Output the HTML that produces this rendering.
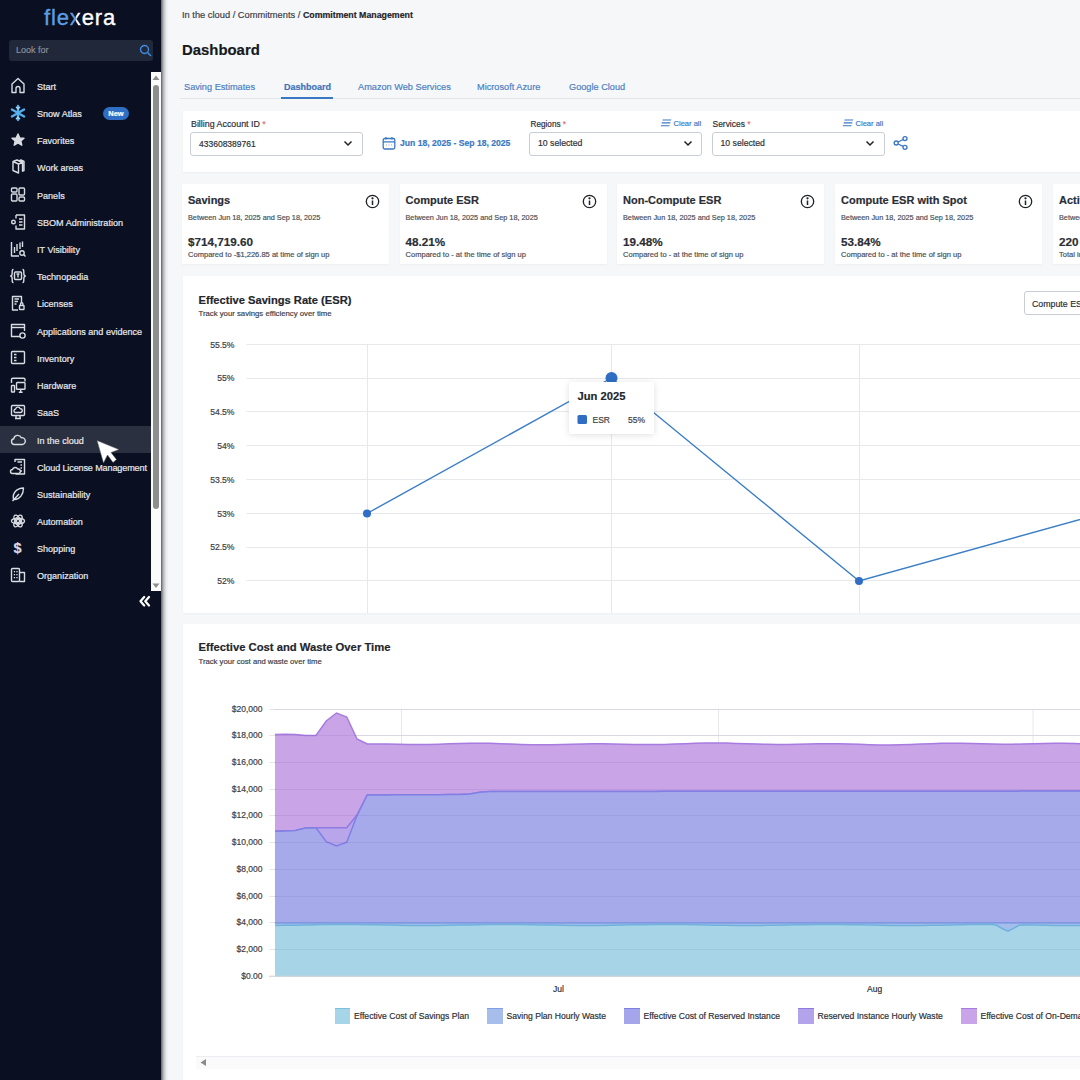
<!DOCTYPE html>
<html><head><meta charset="utf-8">
<style>
*{box-sizing:border-box;margin:0;padding:0}
html,body{width:1080px;height:1080px;overflow:hidden;background:#f6f7f9;font-family:"Liberation Sans",sans-serif;color:#1f2328}
.abs{position:absolute;white-space:nowrap}
#side{position:absolute;left:0;top:0;width:161px;height:1080px;background:#0a1022}
#shadow{position:absolute;left:161px;top:0;width:8px;height:1080px;background:linear-gradient(to right,#606266,#b5b7ba 30%,#eaebed 65%,#f6f7f9)}
.logo{position:absolute;left:44px;top:5px;font-size:22px;color:#fff;letter-spacing:0.85px;white-space:nowrap;-webkit-text-stroke:0.35px currentColor}
.search{position:absolute;left:9px;top:40px;width:144px;height:21px;background:#21283a;border-radius:3px}
.search span{position:absolute;left:7px;top:5px;font-size:9px;color:#8a909c}
.nav{position:absolute;left:37px;font-size:9.05px;color:#e6e8ec;-webkit-text-stroke:0.2px #e6e8ec}
.ico{position:absolute;left:10px;width:16px;height:16px}
.sb{position:absolute;left:151px;top:72px;width:10px;height:519px;background:#fbfbfb}
.thumb{position:absolute;left:153px;top:85px;width:6px;height:424px;background:#8e8e8e;border-radius:3px}
.card{position:absolute;background:#fff;box-shadow:0 1px 2px rgba(0,0,0,0.04)}
.kt,.ks,.kv,.kc,.nav,.tab,.lg,.yl,.lbl{white-space:nowrap}
.lbl{font-size:9px;color:#2b2f36}
.sel{position:absolute;height:24px;border:1px solid #c9cdd5;border-radius:3px;background:#fff}
.sel span{position:absolute;left:8px;top:5px;font-size:9px;color:#2b2f36}
.tab{position:absolute;top:82px;font-size:9.2px;color:#4b80c2}
.kt{position:absolute;font-size:11px;font-weight:bold;color:#2a2e35}
.ks{position:absolute;font-size:7.3px;color:#4a4f57}
.kv{position:absolute;font-size:11.7px;font-weight:bold;color:#2a2e35}
.kc{position:absolute;font-size:7.55px;color:#4a4f57}
.yl{position:absolute;font-size:9px;color:#3a3e45;text-align:right;width:50px}
.lg{position:absolute;top:1009px;font-size:9px;color:#3a3e45}
.sw{position:absolute;top:1008px;width:15px;height:15px}
.stk{-webkit-text-stroke:0.18px currentColor}
</style></head><body>
<div id="shadow"></div>
<div class="stk"><div id="side">
  <div class="logo"><span style="color:#5c9ee6">fle</span><span style="background:linear-gradient(to right,#5c9ee6 45%,#fff 55%);-webkit-background-clip:text;background-clip:text;color:transparent">x</span><span style="color:#fff">era</span></div>
  <div class="search"><span>Look for</span>
    <svg style="position:absolute;left:130px;top:4px" width="13" height="13" viewBox="0 0 13 13"><circle cx="5.5" cy="5.5" r="4" fill="none" stroke="#3d8be0" stroke-width="1.4"/><path d="M8.5 8.5L12 12" stroke="#3d8be0" stroke-width="1.5"/></svg>
  </div>
  <div style="position:absolute;left:0;top:426px;width:151px;height:27px;background:#2a3040"></div>
  <!-- icons -->
  <svg style="position:absolute;left:0;top:0" width="40" height="600" viewBox="0 0 40 600" fill="none" stroke="#d9dce2" stroke-width="1.4" stroke-linejoin="round">
    <!-- Start house y=86 -->
    <path d="M12 92.5V84L18 78.5L24 84V92.5H20V88.5a2 2 0 0 0-4 0V92.5Z"/>
    <!-- Snow atlas y=113 -->
    <g stroke="#56b0ee" stroke-width="2.3" stroke-linecap="round"><path d="M18 106V120M11.9 109.5L24.1 116.5M11.9 116.5L24.1 109.5"/><path d="M16.3 107.2L18 108.8L19.7 107.2M16.3 118.8L18 117.2L19.7 118.8" stroke-width="1.2" stroke="#9fe0f8"/></g>
    <!-- Favorites star y=140 -->
    <path d="M18 134L19.8 138L24 138.3L20.8 141L21.8 145.2L18 143L14.2 145.2L15.2 141L12 138.3L16.2 138Z" fill="#d9dce2"/>
    <!-- Work areas y=167 -->
    <path d="M13 161.5L18.5 164V173L13 170.5Z M13 161.5L17 160L22.5 162.5L18.5 164M19 161L21 160L24 161.5V170.5L22.5 171.2V162.5"/>
    <!-- Panels y=195 -->
    <rect x="11.5" y="188" width="5.5" height="4" rx="1"/><rect x="19" y="188" width="5.5" height="7" rx="1"/><rect x="11.5" y="194" width="5.5" height="7" rx="1"/><rect x="19" y="197" width="5.5" height="4" rx="1"/>
    <!-- SBOM y=222 -->
    <path d="M16 215H24.5V229H16V225.5M16 218.5V215"/><circle cx="13.5" cy="222" r="1.8"/><path d="M19 219H22.5M19 222H22.5M19 225H22.5"/>
    <!-- IT Visibility y=249 -->
    <path d="M11.5 242V256H19M14.5 247V253M17 244V251M20 242.5V249M22.5 241.5V247"/><circle cx="22" cy="253" r="2.2"/><path d="M23.6 254.6L25.5 256.5"/>
    <!-- Technopedia y=276 -->
    <path d="M13.5 269.5C12 269.5 12.2 270.8 12.2 272.8C12.2 274.8 11.6 276 10.6 276C11.6 276 12.2 277.2 12.2 279.2C12.2 281.2 12 282.5 13.5 282.5M22.5 269.5C24 269.5 23.8 270.8 23.8 272.8C23.8 274.8 24.4 276 25.4 276C24.4 276 23.8 277.2 23.8 279.2C23.8 281.2 24 282.5 22.5 282.5"/><rect x="14.5" y="272" width="7" height="7.5" rx="1"/><path d="M16.5 274H19.5M18 274V277.5"/>
    <!-- Licenses y=303 -->
    <path d="M21.5 303V296.5H12.5V310H18"/><path d="M14.5 299H19M14.5 301.5H18M14.5 304H16.5"/><rect x="19.5" y="305.5" width="4.5" height="4" rx="0.5"/><path d="M20.5 305.5V304a1.2 1.2 0 0 1 2.4 0V305.5"/>
    <!-- Applications y=331 -->
    <path d="M20 336.5H11.5V324.5H24.5V331"/><path d="M11.5 327.5H24.5"/><circle cx="22.5" cy="335.5" r="2.6"/>
    <!-- Inventory y=358 -->
    <rect x="11.5" y="351.5" width="13" height="12" rx="1"/><path d="M14 354.5H16.5M14 357.5H16.5M14 360.5H16.5"/>
    <!-- Hardware y=385 -->
    <path d="M11.5 383V379.5a1.3 1.3 0 0 1 1.3-1.3H23.7a1.3 1.3 0 0 1 1.3 1.3V381.5"/><rect x="11.5" y="385.5" width="3" height="6.5" rx="0.6"/><rect x="16.5" y="382.5" width="8.5" height="6.8" rx="0.8"/><path d="M20.7 389.3V392M18.8 392.2H22.6"/>
    <!-- SaaS y=412 -->
    <rect x="11.5" y="405.5" width="13" height="10" rx="1"/><path d="M15.2 412.5a1.8 1.8 0 0 1 .4-3.5a2.4 2.4 0 0 1 4.6-.3a1.8 1.8 0 0 1 .4 3.8Z M16 415.5V418.5M20 415.5V418.5M15 418.5H21"/>
    <!-- In the cloud y=440 -->
    <path d="M14.2 444.5a2.9 2.9 0 0 1-.5-5.7a4 4 0 0 1 7.6-1.1a3.2 3.2 0 0 1 1.1 6.8Z"/>
    <!-- Cloud License y=467 -->
    <path d="M15 462V459.5H24.5V474H15.5"/><path d="M17.5 462H22M20.5 465H22M20.5 468H22M20.5 471H22"/><path d="M12.5 473.5a2 2 0 0 1 0-4a2.8 2.8 0 0 1 5.2-.5a2.2 2.2 0 0 1 .8 4.5Z"/>
    <!-- Sustainability y=494 -->
    <path d="M13.5 499.5C12 493 17 488 23.5 488C23.5 494 20 500 13.5 499.5Z M12.5 501L19 494"/>
    <!-- Automation y=521 -->
    <ellipse cx="18" cy="521" rx="6.5" ry="2.8"/><ellipse cx="18" cy="521" rx="6.5" ry="2.8" transform="rotate(60 18 521)"/><ellipse cx="18" cy="521" rx="6.5" ry="2.8" transform="rotate(-60 18 521)"/><circle cx="18" cy="521" r="1.6"/>
    <!-- Organization y=575 -->
    <rect x="11.5" y="568.5" width="8" height="13" rx="1"/><path d="M19.5 572.5H24.5V581.5H19.5"/><g fill="#d9dce2" stroke="none"><rect x="13.8" y="571" width="1.3" height="1.3"/><rect x="16.3" y="571" width="1.3" height="1.3"/><rect x="13.8" y="574" width="1.3" height="1.3"/><rect x="16.3" y="574" width="1.3" height="1.3"/><rect x="13.8" y="577" width="1.3" height="1.3"/><rect x="16.3" y="577" width="1.3" height="1.3"/></g>
  </svg>
  <div class="abs" style="left:13.5px;top:539.5px;font-size:14.5px;font-weight:bold;color:#d9dce2;line-height:16px">$</div>
  <div class="nav" style="top:81.5px">Start</div>
  <div class="nav" style="top:108.5px">Snow Atlas</div>
  <div class="abs" style="left:103px;top:106.5px;width:26px;height:13px;border-radius:7px;background:#2f6ec4;color:#fff;font-size:7.5px;font-weight:bold;text-align:center;line-height:13px">New</div>
  <div class="nav" style="top:135.5px">Favorites</div>
  <div class="nav" style="top:162.5px">Work areas</div>
  <div class="nav" style="top:190.5px">Panels</div>
  <div class="nav" style="top:217.5px">SBOM Administration</div>
  <div class="nav" style="top:244.5px">IT Visibility</div>
  <div class="nav" style="top:271.5px">Technopedia</div>
  <div class="nav" style="top:298.5px">Licenses</div>
  <div class="nav" style="top:326.5px">Applications and evidence</div>
  <div class="nav" style="top:353.5px">Inventory</div>
  <div class="nav" style="top:380.5px">Hardware</div>
  <div class="nav" style="top:407.5px">SaaS</div>
  <div class="nav" style="top:435.5px">In the cloud</div>
  <div class="nav" style="top:462.5px;letter-spacing:-0.12px">Cloud License Management</div>
  <div class="nav" style="top:489.5px">Sustainability</div>
  <div class="nav" style="top:516.5px">Automation</div>
  <div class="nav" style="top:543.5px">Shopping</div>
  <div class="nav" style="top:570.5px">Organization</div>
  <div class="sb"></div>
  <div class="thumb"></div>
  <svg style="position:absolute;left:151px;top:72px" width="10" height="519"><path d="M1.5 8L5 3.5L8.5 8Z" fill="#8e8e8e"/><path d="M1.5 511.5L5 516L8.5 511.5Z" fill="#8e8e8e"/></svg>
  <svg style="position:absolute;left:139px;top:595px" width="12" height="12" viewBox="0 0 12 12" fill="none" stroke="#fff" stroke-width="2.2" stroke-linecap="round" stroke-linejoin="round"><path d="M5.2 2L1.5 6.3L5.2 10.5M10 2L6.3 6.3L10 10.5"/></svg>
  <!-- cursor -->
  <svg style="position:absolute;left:0;top:0" width="161" height="600"><path d="M97 440.5L119 449.5L111 452.5L116.5 459.5L113 462.5L107.5 455L103.5 463Z" fill="#fff" stroke="#555" stroke-width="0.5"/></svg>
</div>
<!-- header -->
<div class="abs" style="left:182px;top:10px;font-size:9.3px;color:#3c4047">In the cloud / Commitments / <b style="color:#1f2328;font-size:8.8px">Commitment Management</b></div>
<div class="abs" style="left:182px;top:42px;font-size:14.9px;font-weight:bold;color:#16191d">Dashboard</div>
<div class="abs" style="left:180px;top:98px;width:900px;height:1px;background:#e3e5e9"></div>
<div class="tab" style="left:184px">Saving Estimates</div>
<div class="tab" style="left:284px;font-weight:bold;color:#3c72b8;font-size:9px">Dashboard</div>
<div class="abs" style="left:281px;top:97px;width:52px;height:2px;background:#3b78c4"></div>
<div class="tab" style="left:358px">Amazon Web Services</div>
<div class="tab" style="left:477px">Microsoft Azure</div>
<div class="tab" style="left:569px">Google Cloud</div>

<!-- filter card -->
<div class="card" style="left:182.5px;top:111px;width:898px;height:60.5px"></div>
<div class="abs lbl" style="left:191px;top:118.5px;font-size:8.85px">Billing Account ID <span style="color:#e07070">*</span></div>
<div class="sel" style="left:190px;top:131.5px;width:173px"><span style="font-size:8.5px;top:6px">433608389761</span></div>
<svg class="abs" style="left:343px;top:140px" width="10" height="7" viewBox="0 0 10 7"><path d="M1.5 1.5L5 5L8.5 1.5" fill="none" stroke="#1f2328" stroke-width="1.5"/></svg>
<svg class="abs" style="left:382px;top:136px" width="14" height="14" viewBox="0 0 14 14" fill="none" stroke="#3b78c4" stroke-width="1.3"><rect x="1.2" y="2.5" width="11.6" height="10.5" rx="1.5"/><path d="M1.2 5.8H12.8M4 1V3.5M10 1V3.5"/><path d="M4 9H4.6M6.7 9H7.3M9.4 9H10" stroke-width="1"/></svg>
<div class="abs" style="left:400px;top:138px;font-size:8.6px;font-weight:bold;color:#3b78c4">Jun 18, 2025 - Sep 18, 2025</div>

<div class="abs lbl" style="left:530.5px;top:119.5px;font-size:8.2px">Regions <span style="color:#e07070">*</span></div>
<svg class="abs" style="left:660px;top:118px" width="12" height="10" viewBox="0 0 12 10" fill="#3b78c4"><path d="M2.6 1.4H11.3L11 2.5H2.3ZM1.8 4.3H10.5L10.2 5.4H1.5ZM1 7.2H9.7L9.4 8.3H0.7Z"/></svg>
<div class="abs" style="left:673.5px;top:119px;font-size:7.55px;color:#3b78c4">Clear all</div>
<div class="sel" style="left:529px;top:131.5px;width:173px"><span style="font-size:8.7px;top:5.5px">10 selected</span></div>
<svg class="abs" style="left:682.5px;top:140px" width="10" height="7" viewBox="0 0 10 7"><path d="M1.5 1.5L5 5L8.5 1.5" fill="none" stroke="#1f2328" stroke-width="1.5"/></svg>

<div class="abs lbl" style="left:712.5px;top:118.5px;font-size:8.45px">Services <span style="color:#e07070">*</span></div>
<svg class="abs" style="left:842px;top:118px" width="12" height="10" viewBox="0 0 12 10" fill="#3b78c4"><path d="M2.6 1.4H11.3L11 2.5H2.3ZM1.8 4.3H10.5L10.2 5.4H1.5ZM1 7.2H9.7L9.4 8.3H0.7Z"/></svg>
<div class="abs" style="left:855.5px;top:119px;font-size:7.55px;color:#3b78c4">Clear all</div>
<div class="sel" style="left:711.5px;top:131.5px;width:173px"><span style="font-size:8.7px;top:5.5px">10 selected</span></div>
<svg class="abs" style="left:864.5px;top:140px" width="10" height="7" viewBox="0 0 10 7"><path d="M1.5 1.5L5 5L8.5 1.5" fill="none" stroke="#1f2328" stroke-width="1.5"/></svg>
<svg class="abs" style="left:892px;top:135px" width="17" height="16" viewBox="0 0 17 16" fill="none" stroke="#3b78c4" stroke-width="1.35"><circle cx="4.2" cy="8" r="2"/><circle cx="13" cy="3.6" r="2"/><circle cx="13" cy="12.3" r="2"/><path d="M6 7L11.2 4.5M6 9L11.2 11.4"/></svg>
<!-- KPI cards -->
<div class="card" style="left:182px;top:184px;width:207px;height:80px"></div>
<div class="kt" style="left:188px;top:194px">Savings</div>
<svg class="abs" style="left:364.5px;top:193.5px" width="15" height="15" viewBox="0 0 15 15" fill="none" stroke="#1f2328" stroke-width="1.3"><circle cx="7.5" cy="7.5" r="6.2"/><path d="M7.5 6.5V11" stroke-width="1.5"/><circle cx="7.5" cy="4.3" r="0.5" fill="#1f2328"/></svg>
<div class="ks" style="left:188px;top:213px">Between Jun 18, 2025 and Sep 18, 2025</div>
<div class="kv" style="left:188px;top:235px">$714,719.60</div>
<div class="kc" style="left:188px;top:249.5px">Compared to -$1,226.85 at time of sign up</div>
<div class="card" style="left:399.5px;top:184px;width:207px;height:80px"></div>
<div class="kt" style="left:405.5px;top:194px">Compute ESR</div>
<svg class="abs" style="left:582.0px;top:193.5px" width="15" height="15" viewBox="0 0 15 15" fill="none" stroke="#1f2328" stroke-width="1.3"><circle cx="7.5" cy="7.5" r="6.2"/><path d="M7.5 6.5V11" stroke-width="1.5"/><circle cx="7.5" cy="4.3" r="0.5" fill="#1f2328"/></svg>
<div class="ks" style="left:405.5px;top:213px">Between Jun 18, 2025 and Sep 18, 2025</div>
<div class="kv" style="left:405.5px;top:235px">48.21%</div>
<div class="kc" style="left:405.5px;top:249.5px">Compared to - at the time of sign up</div>
<div class="card" style="left:617px;top:184px;width:207px;height:80px"></div>
<div class="kt" style="left:623px;top:194px">Non-Compute ESR</div>
<svg class="abs" style="left:799.5px;top:193.5px" width="15" height="15" viewBox="0 0 15 15" fill="none" stroke="#1f2328" stroke-width="1.3"><circle cx="7.5" cy="7.5" r="6.2"/><path d="M7.5 6.5V11" stroke-width="1.5"/><circle cx="7.5" cy="4.3" r="0.5" fill="#1f2328"/></svg>
<div class="ks" style="left:623px;top:213px">Between Jun 18, 2025 and Sep 18, 2025</div>
<div class="kv" style="left:623px;top:235px">19.48%</div>
<div class="kc" style="left:623px;top:249.5px">Compared to - at the time of sign up</div>
<div class="card" style="left:835px;top:184px;width:207px;height:80px"></div>
<div class="kt" style="left:841px;top:194px">Compute ESR with Spot</div>
<svg class="abs" style="left:1017.5px;top:193.5px" width="15" height="15" viewBox="0 0 15 15" fill="none" stroke="#1f2328" stroke-width="1.3"><circle cx="7.5" cy="7.5" r="6.2"/><path d="M7.5 6.5V11" stroke-width="1.5"/><circle cx="7.5" cy="4.3" r="0.5" fill="#1f2328"/></svg>
<div class="ks" style="left:841px;top:213px">Between Jun 18, 2025 and Sep 18, 2025</div>
<div class="kv" style="left:841px;top:235px">53.84%</div>
<div class="kc" style="left:841px;top:249.5px">Compared to - at the time of sign up</div>
<div class="card" style="left:1053px;top:184px;width:207px;height:80px"></div>
<div class="kt" style="left:1059px;top:194px">Active Commitments</div>
<div class="ks" style="left:1059px;top:213px">Between Jun 18, 2025 and Sep 18, 2025</div>
<div class="kv" style="left:1059px;top:235px">220</div>
<div class="kc" style="left:1059px;top:249.5px">Total in use</div>
<!-- ESR card -->
<div class="card" style="left:183px;top:275.5px;width:897px;height:337.5px"></div>
<div class="abs" style="left:198.5px;top:293.5px;font-size:11.15px;font-weight:bold;color:#22262c">Effective Savings Rate (ESR)</div>
<div class="abs" style="left:198.5px;top:309px;font-size:7.75px;color:#3a3e45">Track your savings efficiency over time</div>
<div class="abs" style="left:1024px;top:291px;width:80px;height:24px;border:1px solid #c9cdd5;border-radius:3px;background:#fff"></div>
<div class="abs" style="left:1032px;top:299px;font-size:8.8px;color:#2b2f36">Compute ESR</div>
<svg class="abs" style="left:0;top:0" width="1080" height="620">
<path d="M246.5 344.5H1080" stroke="#e7e8ec" stroke-width="1"/>
<path d="M246.5 378.5H1080" stroke="#e7e8ec" stroke-width="1"/>
<path d="M246.5 411.5H1080" stroke="#e7e8ec" stroke-width="1"/>
<path d="M246.5 445.5H1080" stroke="#e7e8ec" stroke-width="1"/>
<path d="M246.5 479.5H1080" stroke="#e7e8ec" stroke-width="1"/>
<path d="M246.5 513.5H1080" stroke="#e7e8ec" stroke-width="1"/>
<path d="M246.5 547.5H1080" stroke="#e7e8ec" stroke-width="1"/>
<path d="M246.5 580.5H1080" stroke="#e7e8ec" stroke-width="1"/>
<path d="M367.5 344.5V613" stroke="#e7e8ec" stroke-width="1"/>
<path d="M611.5 344.5V613" stroke="#e7e8ec" stroke-width="1"/>
<path d="M859.5 344.5V613" stroke="#e7e8ec" stroke-width="1"/>
<path d="M367 513.5L611.5 378L859 581L1105 512.5" fill="none" stroke="#3b7ec6" stroke-width="1.4"/>
<circle cx="367" cy="513.5" r="4" fill="#2f6ec4"/><circle cx="859" cy="581" r="4" fill="#2f6ec4"/><circle cx="611.5" cy="378" r="6" fill="#2f6ec4"/>
<defs><filter id="sh" x="-30%" y="-30%" width="160%" height="160%"><feDropShadow dx="0" dy="1" stdDeviation="3" flood-color="#000" flood-opacity="0.13"/></filter></defs>
<rect x="569" y="382" width="85" height="52" rx="3" fill="#fff" filter="url(#sh)"/>
<rect x="577.5" y="415" width="9.5" height="9" rx="1.5" fill="#2f6ec4"/>
</svg>
<div class="yl" style="left:184.5px;top:338.5px;font-size:8.6px;line-height:12px">55.5%</div>
<div class="yl" style="left:184.5px;top:372px;font-size:8.6px;line-height:12px">55%</div>
<div class="yl" style="left:184.5px;top:406px;font-size:8.6px;line-height:12px">54.5%</div>
<div class="yl" style="left:184.5px;top:439.5px;font-size:8.6px;line-height:12px">54%</div>
<div class="yl" style="left:184.5px;top:474px;font-size:8.6px;line-height:12px">53.5%</div>
<div class="yl" style="left:184.5px;top:507.5px;font-size:8.6px;line-height:12px">53%</div>
<div class="yl" style="left:184.5px;top:541px;font-size:8.6px;line-height:12px">52.5%</div>
<div class="yl" style="left:184.5px;top:575px;font-size:8.6px;line-height:12px">52%</div>
<div class="abs" style="left:577.5px;top:390px;font-size:11.2px;font-weight:bold;color:#22262c">Jun 2025</div>
<div class="abs" style="left:592.5px;top:415px;font-size:8.5px;color:#3a3e45">ESR</div>
<div class="abs" style="left:628px;top:415px;font-size:8.5px;color:#3a3e45">55%</div>
<!-- Cost card -->
<div class="card" style="left:183px;top:624px;width:897px;height:456px"></div>
<div class="abs" style="left:198.5px;top:640.5px;font-size:11.25px;font-weight:bold;color:#22262c">Effective Cost and Waste Over Time</div>
<div class="abs" style="left:198.5px;top:657px;font-size:7.7px;color:#3a3e45">Track your cost and waste over time</div>
<svg class="abs" style="left:0;top:0" width="1080" height="1080">
<defs><clipPath id="cp"><rect x="274" y="600" width="806" height="377"/></clipPath></defs>
<path d="M269 709.50H1080" stroke="#e7e8ec" stroke-width="1"/>
<path d="M269 735.50H1080" stroke="#e7e8ec" stroke-width="1"/>
<path d="M269 762.50H1080" stroke="#e7e8ec" stroke-width="1"/>
<path d="M269 789.50H1080" stroke="#e7e8ec" stroke-width="1"/>
<path d="M269 815.50H1080" stroke="#e7e8ec" stroke-width="1"/>
<path d="M269 842.50H1080" stroke="#e7e8ec" stroke-width="1"/>
<path d="M269 869.50H1080" stroke="#e7e8ec" stroke-width="1"/>
<path d="M269 896.50H1080" stroke="#e7e8ec" stroke-width="1"/>
<path d="M269 922.50H1080" stroke="#e7e8ec" stroke-width="1"/>
<path d="M269 949.50H1080" stroke="#e7e8ec" stroke-width="1"/>
<path d="M269 976.50H1080" stroke="#e7e8ec" stroke-width="1"/>
<path d="M401.5 709V976" stroke="#e7e8ec" stroke-width="1"/>
<path d="M718.5 709V976" stroke="#e7e8ec" stroke-width="1"/>
<path d="M1033 709V976" stroke="#e7e8ec" stroke-width="1"/>
<g clip-path="url(#cp)">
<path d="M275.00 734.40 L285.25 734.30 L295.50 734.60 L305.75 735.50 L316.00 735.50 L326.25 721.00 L336.50 713.00 L346.75 717.00 L357.00 739.00 L367.25 743.95 L377.50 743.97 L387.75 744.12 L398.00 744.32 L408.25 744.48 L418.50 744.51 L428.75 744.39 L439.00 744.13 L449.25 743.79 L459.50 743.45 L469.75 743.22 L480.00 743.15 L490.25 743.31 L500.50 743.64 L510.75 744.05 L521.00 744.45 L531.25 744.74 L541.50 744.85 L551.75 744.77 L562.00 744.55 L572.25 744.25 L582.50 743.97 L592.75 743.80 L603.00 743.78 L613.25 743.91 L623.50 744.14 L633.75 744.38 L644.00 744.55 L654.25 744.56 L664.50 744.41 L674.75 744.10 L685.00 743.71 L695.25 743.34 L705.50 743.09 L715.75 743.00 L726.00 743.12 L736.25 743.40 L746.50 743.77 L756.75 744.12 L767.00 744.37 L777.25 744.47 L787.50 744.39 L797.75 744.20 L808.00 743.96 L818.25 743.77 L828.50 743.71 L838.75 743.80 L849.00 744.04 L859.25 744.36 L869.50 744.67 L879.75 744.88 L890.00 744.92 L900.25 744.76 L910.50 744.44 L920.75 744.03 L931.00 743.64 L941.25 743.35 L951.50 743.23 L961.75 743.29 L972.00 743.50 L982.25 743.78 L992.50 744.04 L1002.75 744.19 L1013.00 744.18 L1023.25 744.03 L1033.50 743.79 L1043.75 743.54 L1054.00 743.36 L1064.25 743.35 L1074.50 743.51 L1084.75 743.82 L1095.00 744.22 L1105.25 744.60 L1105.25 791.07 L1095.00 791.07 L1084.75 791.08 L1074.50 791.09 L1064.25 791.09 L1054.00 791.10 L1043.75 791.11 L1033.50 791.12 L1023.25 791.12 L1013.00 791.13 L1002.75 791.14 L992.50 791.15 L982.25 791.15 L972.00 791.16 L961.75 791.17 L951.50 791.17 L941.25 791.18 L931.00 791.19 L920.75 791.20 L910.50 791.20 L900.25 791.21 L890.00 791.22 L879.75 791.22 L869.50 791.23 L859.25 791.24 L849.00 791.25 L838.75 791.25 L828.50 791.26 L818.25 791.27 L808.00 791.27 L797.75 791.28 L787.50 791.29 L777.25 791.30 L767.00 791.30 L756.75 791.31 L746.50 791.32 L736.25 791.32 L726.00 791.33 L715.75 791.34 L705.50 791.35 L695.25 791.35 L685.00 791.36 L674.75 791.37 L664.50 791.37 L654.25 791.38 L644.00 791.39 L633.75 791.40 L623.50 791.40 L613.25 791.41 L603.00 791.42 L592.75 791.42 L582.50 791.43 L572.25 791.44 L562.00 791.45 L551.75 791.45 L541.50 791.46 L531.25 791.47 L521.00 791.47 L510.75 791.48 L500.50 791.49 L490.25 791.50 L480.00 792.29 L469.75 793.91 L459.50 794.53 L449.25 794.58 L439.00 794.64 L428.75 794.69 L418.50 794.74 L408.25 794.79 L398.00 794.84 L387.75 794.90 L377.50 794.95 L367.25 795.00 L357.00 815.00 L346.75 827.80 L336.50 827.80 L326.25 827.80 L316.00 827.80 L305.75 828.00 L295.50 830.50 L285.25 831.00 L275.00 831.30 Z" fill="#c9a4e7"/><path d="M275.00 734.40 L285.25 734.30 L295.50 734.60 L305.75 735.50 L316.00 735.50 L326.25 721.00 L336.50 713.00 L346.75 717.00 L357.00 739.00 L367.25 743.95 L377.50 743.97 L387.75 744.12 L398.00 744.32 L408.25 744.48 L418.50 744.51 L428.75 744.39 L439.00 744.13 L449.25 743.79 L459.50 743.45 L469.75 743.22 L480.00 743.15 L490.25 743.31 L500.50 743.64 L510.75 744.05 L521.00 744.45 L531.25 744.74 L541.50 744.85 L551.75 744.77 L562.00 744.55 L572.25 744.25 L582.50 743.97 L592.75 743.80 L603.00 743.78 L613.25 743.91 L623.50 744.14 L633.75 744.38 L644.00 744.55 L654.25 744.56 L664.50 744.41 L674.75 744.10 L685.00 743.71 L695.25 743.34 L705.50 743.09 L715.75 743.00 L726.00 743.12 L736.25 743.40 L746.50 743.77 L756.75 744.12 L767.00 744.37 L777.25 744.47 L787.50 744.39 L797.75 744.20 L808.00 743.96 L818.25 743.77 L828.50 743.71 L838.75 743.80 L849.00 744.04 L859.25 744.36 L869.50 744.67 L879.75 744.88 L890.00 744.92 L900.25 744.76 L910.50 744.44 L920.75 744.03 L931.00 743.64 L941.25 743.35 L951.50 743.23 L961.75 743.29 L972.00 743.50 L982.25 743.78 L992.50 744.04 L1002.75 744.19 L1013.00 744.18 L1023.25 744.03 L1033.50 743.79 L1043.75 743.54 L1054.00 743.36 L1064.25 743.35 L1074.50 743.51 L1084.75 743.82 L1095.00 744.22 L1105.25 744.60" fill="none" stroke="#a77be0" stroke-width="1.5"/>
<path d="M275.00 831.30 L285.25 831.00 L295.50 830.50 L305.75 828.00 L316.00 827.80 L326.25 827.80 L336.50 827.80 L346.75 827.80 L357.00 815.00 L367.25 795.00 L377.50 794.95 L387.75 794.90 L398.00 794.84 L408.25 794.79 L418.50 794.74 L428.75 794.69 L439.00 794.64 L449.25 794.58 L459.50 794.53 L469.75 793.91 L480.00 792.29 L490.25 791.50 L500.50 791.49 L510.75 791.48 L521.00 791.47 L531.25 791.47 L541.50 791.46 L551.75 791.45 L562.00 791.45 L572.25 791.44 L582.50 791.43 L592.75 791.42 L603.00 791.42 L613.25 791.41 L623.50 791.40 L633.75 791.40 L644.00 791.39 L654.25 791.38 L664.50 791.37 L674.75 791.37 L685.00 791.36 L695.25 791.35 L705.50 791.35 L715.75 791.34 L726.00 791.33 L736.25 791.32 L746.50 791.32 L756.75 791.31 L767.00 791.30 L777.25 791.30 L787.50 791.29 L797.75 791.28 L808.00 791.27 L818.25 791.27 L828.50 791.26 L838.75 791.25 L849.00 791.25 L859.25 791.24 L869.50 791.23 L879.75 791.22 L890.00 791.22 L900.25 791.21 L910.50 791.20 L920.75 791.20 L931.00 791.19 L941.25 791.18 L951.50 791.17 L961.75 791.17 L972.00 791.16 L982.25 791.15 L992.50 791.15 L1002.75 791.14 L1013.00 791.13 L1023.25 791.12 L1033.50 791.12 L1043.75 791.11 L1054.00 791.10 L1064.25 791.09 L1074.50 791.09 L1084.75 791.08 L1095.00 791.07 L1105.25 791.07 L1105.25 791.07 L1095.00 791.07 L1084.75 791.08 L1074.50 791.09 L1064.25 791.09 L1054.00 791.10 L1043.75 791.11 L1033.50 791.12 L1023.25 791.12 L1013.00 791.13 L1002.75 791.14 L992.50 791.15 L982.25 791.15 L972.00 791.16 L961.75 791.17 L951.50 791.17 L941.25 791.18 L931.00 791.19 L920.75 791.20 L910.50 791.20 L900.25 791.21 L890.00 791.22 L879.75 791.22 L869.50 791.23 L859.25 791.24 L849.00 791.25 L838.75 791.25 L828.50 791.26 L818.25 791.27 L808.00 791.27 L797.75 791.28 L787.50 791.29 L777.25 791.30 L767.00 791.30 L756.75 791.31 L746.50 791.32 L736.25 791.32 L726.00 791.33 L715.75 791.34 L705.50 791.35 L695.25 791.35 L685.00 791.36 L674.75 791.37 L664.50 791.37 L654.25 791.38 L644.00 791.39 L633.75 791.40 L623.50 791.40 L613.25 791.41 L603.00 791.42 L592.75 791.42 L582.50 791.43 L572.25 791.44 L562.00 791.45 L551.75 791.45 L541.50 791.46 L531.25 791.47 L521.00 791.47 L510.75 791.48 L500.50 791.49 L490.25 791.50 L480.00 792.29 L469.75 793.91 L459.50 794.53 L449.25 794.58 L439.00 794.64 L428.75 794.69 L418.50 794.74 L408.25 794.79 L398.00 794.84 L387.75 794.90 L377.50 794.95 L367.25 795.00 L357.00 815.60 L346.75 842.20 L336.50 846.00 L326.25 841.70 L316.00 827.80 L305.75 828.00 L295.50 830.50 L285.25 831.00 L275.00 831.30 Z" fill="#b9a6ea"/><path d="M275.00 831.30 L285.25 831.00 L295.50 830.50 L305.75 828.00 L316.00 827.80 L326.25 827.80 L336.50 827.80 L346.75 827.80 L357.00 815.00 L367.25 795.00 L377.50 794.95 L387.75 794.90 L398.00 794.84 L408.25 794.79 L418.50 794.74 L428.75 794.69 L439.00 794.64 L449.25 794.58 L459.50 794.53 L469.75 793.91 L480.00 792.29 L490.25 791.50 L500.50 791.49 L510.75 791.48 L521.00 791.47 L531.25 791.47 L541.50 791.46 L551.75 791.45 L562.00 791.45 L572.25 791.44 L582.50 791.43 L592.75 791.42 L603.00 791.42 L613.25 791.41 L623.50 791.40 L633.75 791.40 L644.00 791.39 L654.25 791.38 L664.50 791.37 L674.75 791.37 L685.00 791.36 L695.25 791.35 L705.50 791.35 L715.75 791.34 L726.00 791.33 L736.25 791.32 L746.50 791.32 L756.75 791.31 L767.00 791.30 L777.25 791.30 L787.50 791.29 L797.75 791.28 L808.00 791.27 L818.25 791.27 L828.50 791.26 L838.75 791.25 L849.00 791.25 L859.25 791.24 L869.50 791.23 L879.75 791.22 L890.00 791.22 L900.25 791.21 L910.50 791.20 L920.75 791.20 L931.00 791.19 L941.25 791.18 L951.50 791.17 L961.75 791.17 L972.00 791.16 L982.25 791.15 L992.50 791.15 L1002.75 791.14 L1013.00 791.13 L1023.25 791.12 L1033.50 791.12 L1043.75 791.11 L1054.00 791.10 L1064.25 791.09 L1074.50 791.09 L1084.75 791.08 L1095.00 791.07 L1105.25 791.07" fill="none" stroke="#8f7ae2" stroke-width="1.5"/>
<path d="M275.00 831.30 L285.25 831.00 L295.50 830.50 L305.75 828.00 L316.00 827.80 L326.25 841.70 L336.50 846.00 L346.75 842.20 L357.00 815.60 L367.25 795.00 L377.50 794.95 L387.75 794.90 L398.00 794.84 L408.25 794.79 L418.50 794.74 L428.75 794.69 L439.00 794.64 L449.25 794.58 L459.50 794.53 L469.75 793.91 L480.00 792.29 L490.25 791.50 L500.50 791.49 L510.75 791.48 L521.00 791.47 L531.25 791.47 L541.50 791.46 L551.75 791.45 L562.00 791.45 L572.25 791.44 L582.50 791.43 L592.75 791.42 L603.00 791.42 L613.25 791.41 L623.50 791.40 L633.75 791.40 L644.00 791.39 L654.25 791.38 L664.50 791.37 L674.75 791.37 L685.00 791.36 L695.25 791.35 L705.50 791.35 L715.75 791.34 L726.00 791.33 L736.25 791.32 L746.50 791.32 L756.75 791.31 L767.00 791.30 L777.25 791.30 L787.50 791.29 L797.75 791.28 L808.00 791.27 L818.25 791.27 L828.50 791.26 L838.75 791.25 L849.00 791.25 L859.25 791.24 L869.50 791.23 L879.75 791.22 L890.00 791.22 L900.25 791.21 L910.50 791.20 L920.75 791.20 L931.00 791.19 L941.25 791.18 L951.50 791.17 L961.75 791.17 L972.00 791.16 L982.25 791.15 L992.50 791.15 L1002.75 791.14 L1013.00 791.13 L1023.25 791.12 L1033.50 791.12 L1043.75 791.11 L1054.00 791.10 L1064.25 791.09 L1074.50 791.09 L1084.75 791.08 L1095.00 791.07 L1105.25 791.07 L1105.25 923.00 L1095.00 923.00 L1084.75 923.00 L1074.50 923.00 L1064.25 923.00 L1054.00 923.00 L1043.75 923.00 L1033.50 923.00 L1023.25 923.00 L1013.00 923.00 L1002.75 923.00 L992.50 923.00 L982.25 923.00 L972.00 923.00 L961.75 923.00 L951.50 923.00 L941.25 923.00 L931.00 923.00 L920.75 923.00 L910.50 923.00 L900.25 923.00 L890.00 923.00 L879.75 923.00 L869.50 923.00 L859.25 923.00 L849.00 923.00 L838.75 923.00 L828.50 923.00 L818.25 923.00 L808.00 923.00 L797.75 923.00 L787.50 923.00 L777.25 923.00 L767.00 923.00 L756.75 923.00 L746.50 923.00 L736.25 923.00 L726.00 923.00 L715.75 923.00 L705.50 923.00 L695.25 923.00 L685.00 923.00 L674.75 923.00 L664.50 923.00 L654.25 923.00 L644.00 923.00 L633.75 923.00 L623.50 923.00 L613.25 923.00 L603.00 923.00 L592.75 923.00 L582.50 923.00 L572.25 923.00 L562.00 923.00 L551.75 923.00 L541.50 923.00 L531.25 923.00 L521.00 923.00 L510.75 923.00 L500.50 923.00 L490.25 923.00 L480.00 923.00 L469.75 923.00 L459.50 923.00 L449.25 923.00 L439.00 923.00 L428.75 923.00 L418.50 923.00 L408.25 923.00 L398.00 923.00 L387.75 923.00 L377.50 923.00 L367.25 923.00 L357.00 923.00 L346.75 923.00 L336.50 923.00 L326.25 923.00 L316.00 923.00 L305.75 923.00 L295.50 923.00 L285.25 923.00 L275.00 923.00 Z" fill="#a6a9ea"/><path d="M275.00 831.30 L285.25 831.00 L295.50 830.50 L305.75 828.00 L316.00 827.80 L326.25 841.70 L336.50 846.00 L346.75 842.20 L357.00 815.60 L367.25 795.00 L377.50 794.95 L387.75 794.90 L398.00 794.84 L408.25 794.79 L418.50 794.74 L428.75 794.69 L439.00 794.64 L449.25 794.58 L459.50 794.53 L469.75 793.91 L480.00 792.29 L490.25 791.50 L500.50 791.49 L510.75 791.48 L521.00 791.47 L531.25 791.47 L541.50 791.46 L551.75 791.45 L562.00 791.45 L572.25 791.44 L582.50 791.43 L592.75 791.42 L603.00 791.42 L613.25 791.41 L623.50 791.40 L633.75 791.40 L644.00 791.39 L654.25 791.38 L664.50 791.37 L674.75 791.37 L685.00 791.36 L695.25 791.35 L705.50 791.35 L715.75 791.34 L726.00 791.33 L736.25 791.32 L746.50 791.32 L756.75 791.31 L767.00 791.30 L777.25 791.30 L787.50 791.29 L797.75 791.28 L808.00 791.27 L818.25 791.27 L828.50 791.26 L838.75 791.25 L849.00 791.25 L859.25 791.24 L869.50 791.23 L879.75 791.22 L890.00 791.22 L900.25 791.21 L910.50 791.20 L920.75 791.20 L931.00 791.19 L941.25 791.18 L951.50 791.17 L961.75 791.17 L972.00 791.16 L982.25 791.15 L992.50 791.15 L1002.75 791.14 L1013.00 791.13 L1023.25 791.12 L1033.50 791.12 L1043.75 791.11 L1054.00 791.10 L1064.25 791.09 L1074.50 791.09 L1084.75 791.08 L1095.00 791.07 L1105.25 791.07" fill="none" stroke="#7f7fe4" stroke-width="1.5"/>
<path d="M275.00 923.00 L285.25 923.00 L295.50 923.00 L305.75 923.00 L316.00 923.00 L326.25 923.00 L336.50 923.00 L346.75 923.00 L357.00 923.00 L367.25 923.00 L377.50 923.00 L387.75 923.00 L398.00 923.00 L408.25 923.00 L418.50 923.00 L428.75 923.00 L439.00 923.00 L449.25 923.00 L459.50 923.00 L469.75 923.00 L480.00 923.00 L490.25 923.00 L500.50 923.00 L510.75 923.00 L521.00 923.00 L531.25 923.00 L541.50 923.00 L551.75 923.00 L562.00 923.00 L572.25 923.00 L582.50 923.00 L592.75 923.00 L603.00 923.00 L613.25 923.00 L623.50 923.00 L633.75 923.00 L644.00 923.00 L654.25 923.00 L664.50 923.00 L674.75 923.00 L685.00 923.00 L695.25 923.00 L705.50 923.00 L715.75 923.00 L726.00 923.00 L736.25 923.00 L746.50 923.00 L756.75 923.00 L767.00 923.00 L777.25 923.00 L787.50 923.00 L797.75 923.00 L808.00 923.00 L818.25 923.00 L828.50 923.00 L838.75 923.00 L849.00 923.00 L859.25 923.00 L869.50 923.00 L879.75 923.00 L890.00 923.00 L900.25 923.00 L910.50 923.00 L920.75 923.00 L931.00 923.00 L941.25 923.00 L951.50 923.00 L961.75 923.00 L972.00 923.00 L982.25 923.00 L992.50 923.00 L1002.75 923.00 L1013.00 923.00 L1023.25 923.00 L1033.50 923.00 L1043.75 923.00 L1054.00 923.00 L1064.25 923.00 L1074.50 923.00 L1084.75 923.00 L1095.00 923.00 L1105.25 923.00 L1105.25 925.08 L1095.00 925.26 L1084.75 925.41 L1074.50 925.49 L1064.25 925.49 L1054.00 925.42 L1043.75 925.28 L1033.50 925.09 L1023.25 924.89 L1019.00 925.30 L1013.50 928.30 L1008.00 931.20 L1003.00 929.00 L996.50 925.30 L992.50 924.51 L982.25 924.51 L972.00 924.60 L961.75 924.75 L951.50 924.94 L941.25 925.14 L931.00 925.31 L920.75 925.44 L910.50 925.50 L900.25 925.48 L890.00 925.38 L879.75 925.23 L869.50 925.03 L859.25 924.84 L849.00 924.67 L838.75 924.55 L828.50 924.50 L818.25 924.53 L808.00 924.64 L797.75 924.80 L787.50 925.00 L777.25 925.19 L767.00 925.36 L756.75 925.46 L746.50 925.50 L736.25 925.46 L726.00 925.34 L715.75 925.17 L705.50 924.98 L695.25 924.78 L685.00 924.62 L674.75 924.53 L664.50 924.50 L654.25 924.56 L644.00 924.68 L633.75 924.86 L623.50 925.05 L613.25 925.24 L603.00 925.39 L592.75 925.48 L582.50 925.50 L572.25 925.43 L562.00 925.30 L551.75 925.12 L541.50 924.92 L531.25 924.73 L521.00 924.59 L510.75 924.51 L500.50 924.51 L490.25 924.59 L480.00 924.73 L469.75 924.91 L459.50 925.11 L449.25 925.29 L439.00 925.43 L428.75 925.49 L418.50 925.48 L408.25 925.40 L398.00 925.25 L387.75 925.06 L377.50 924.86 L367.25 924.68 L357.00 924.56 L346.75 924.50 L336.50 924.52 L326.25 924.62 L316.00 924.78 L305.75 924.97 L295.50 925.17 L285.25 925.34 L275.00 925.45 Z" fill="#a5bdea"/><path d="M275.00 923.00 L285.25 923.00 L295.50 923.00 L305.75 923.00 L316.00 923.00 L326.25 923.00 L336.50 923.00 L346.75 923.00 L357.00 923.00 L367.25 923.00 L377.50 923.00 L387.75 923.00 L398.00 923.00 L408.25 923.00 L418.50 923.00 L428.75 923.00 L439.00 923.00 L449.25 923.00 L459.50 923.00 L469.75 923.00 L480.00 923.00 L490.25 923.00 L500.50 923.00 L510.75 923.00 L521.00 923.00 L531.25 923.00 L541.50 923.00 L551.75 923.00 L562.00 923.00 L572.25 923.00 L582.50 923.00 L592.75 923.00 L603.00 923.00 L613.25 923.00 L623.50 923.00 L633.75 923.00 L644.00 923.00 L654.25 923.00 L664.50 923.00 L674.75 923.00 L685.00 923.00 L695.25 923.00 L705.50 923.00 L715.75 923.00 L726.00 923.00 L736.25 923.00 L746.50 923.00 L756.75 923.00 L767.00 923.00 L777.25 923.00 L787.50 923.00 L797.75 923.00 L808.00 923.00 L818.25 923.00 L828.50 923.00 L838.75 923.00 L849.00 923.00 L859.25 923.00 L869.50 923.00 L879.75 923.00 L890.00 923.00 L900.25 923.00 L910.50 923.00 L920.75 923.00 L931.00 923.00 L941.25 923.00 L951.50 923.00 L961.75 923.00 L972.00 923.00 L982.25 923.00 L992.50 923.00 L1002.75 923.00 L1013.00 923.00 L1023.25 923.00 L1033.50 923.00 L1043.75 923.00 L1054.00 923.00 L1064.25 923.00 L1074.50 923.00 L1084.75 923.00 L1095.00 923.00 L1105.25 923.00" fill="none" stroke="#7f9fe6" stroke-width="1.5"/>
<path d="M275.00 925.45 L285.25 925.34 L295.50 925.17 L305.75 924.97 L316.00 924.78 L326.25 924.62 L336.50 924.52 L346.75 924.50 L357.00 924.56 L367.25 924.68 L377.50 924.86 L387.75 925.06 L398.00 925.25 L408.25 925.40 L418.50 925.48 L428.75 925.49 L439.00 925.43 L449.25 925.29 L459.50 925.11 L469.75 924.91 L480.00 924.73 L490.25 924.59 L500.50 924.51 L510.75 924.51 L521.00 924.59 L531.25 924.73 L541.50 924.92 L551.75 925.12 L562.00 925.30 L572.25 925.43 L582.50 925.50 L592.75 925.48 L603.00 925.39 L613.25 925.24 L623.50 925.05 L633.75 924.86 L644.00 924.68 L654.25 924.56 L664.50 924.50 L674.75 924.53 L685.00 924.62 L695.25 924.78 L705.50 924.98 L715.75 925.17 L726.00 925.34 L736.25 925.46 L746.50 925.50 L756.75 925.46 L767.00 925.36 L777.25 925.19 L787.50 925.00 L797.75 924.80 L808.00 924.64 L818.25 924.53 L828.50 924.50 L838.75 924.55 L849.00 924.67 L859.25 924.84 L869.50 925.03 L879.75 925.23 L890.00 925.38 L900.25 925.48 L910.50 925.50 L920.75 925.44 L931.00 925.31 L941.25 925.14 L951.50 924.94 L961.75 924.75 L972.00 924.60 L982.25 924.51 L992.50 924.51 L996.50 925.30 L1003.00 929.00 L1008.00 931.20 L1013.50 928.30 L1019.00 925.30 L1023.25 924.89 L1033.50 925.09 L1043.75 925.28 L1054.00 925.42 L1064.25 925.49 L1074.50 925.49 L1084.75 925.41 L1095.00 925.26 L1105.25 925.08 L1105.25 976.50 L1095.00 976.50 L1084.75 976.50 L1074.50 976.50 L1064.25 976.50 L1054.00 976.50 L1043.75 976.50 L1033.50 976.50 L1023.25 976.50 L1019.00 976.50 L1013.50 976.50 L1008.00 976.50 L1003.00 976.50 L996.50 976.50 L992.50 976.50 L982.25 976.50 L972.00 976.50 L961.75 976.50 L951.50 976.50 L941.25 976.50 L931.00 976.50 L920.75 976.50 L910.50 976.50 L900.25 976.50 L890.00 976.50 L879.75 976.50 L869.50 976.50 L859.25 976.50 L849.00 976.50 L838.75 976.50 L828.50 976.50 L818.25 976.50 L808.00 976.50 L797.75 976.50 L787.50 976.50 L777.25 976.50 L767.00 976.50 L756.75 976.50 L746.50 976.50 L736.25 976.50 L726.00 976.50 L715.75 976.50 L705.50 976.50 L695.25 976.50 L685.00 976.50 L674.75 976.50 L664.50 976.50 L654.25 976.50 L644.00 976.50 L633.75 976.50 L623.50 976.50 L613.25 976.50 L603.00 976.50 L592.75 976.50 L582.50 976.50 L572.25 976.50 L562.00 976.50 L551.75 976.50 L541.50 976.50 L531.25 976.50 L521.00 976.50 L510.75 976.50 L500.50 976.50 L490.25 976.50 L480.00 976.50 L469.75 976.50 L459.50 976.50 L449.25 976.50 L439.00 976.50 L428.75 976.50 L418.50 976.50 L408.25 976.50 L398.00 976.50 L387.75 976.50 L377.50 976.50 L367.25 976.50 L357.00 976.50 L346.75 976.50 L336.50 976.50 L326.25 976.50 L316.00 976.50 L305.75 976.50 L295.50 976.50 L285.25 976.50 L275.00 976.50 Z" fill="#a7d5e7"/><path d="M275.00 925.45 L285.25 925.34 L295.50 925.17 L305.75 924.97 L316.00 924.78 L326.25 924.62 L336.50 924.52 L346.75 924.50 L357.00 924.56 L367.25 924.68 L377.50 924.86 L387.75 925.06 L398.00 925.25 L408.25 925.40 L418.50 925.48 L428.75 925.49 L439.00 925.43 L449.25 925.29 L459.50 925.11 L469.75 924.91 L480.00 924.73 L490.25 924.59 L500.50 924.51 L510.75 924.51 L521.00 924.59 L531.25 924.73 L541.50 924.92 L551.75 925.12 L562.00 925.30 L572.25 925.43 L582.50 925.50 L592.75 925.48 L603.00 925.39 L613.25 925.24 L623.50 925.05 L633.75 924.86 L644.00 924.68 L654.25 924.56 L664.50 924.50 L674.75 924.53 L685.00 924.62 L695.25 924.78 L705.50 924.98 L715.75 925.17 L726.00 925.34 L736.25 925.46 L746.50 925.50 L756.75 925.46 L767.00 925.36 L777.25 925.19 L787.50 925.00 L797.75 924.80 L808.00 924.64 L818.25 924.53 L828.50 924.50 L838.75 924.55 L849.00 924.67 L859.25 924.84 L869.50 925.03 L879.75 925.23 L890.00 925.38 L900.25 925.48 L910.50 925.50 L920.75 925.44 L931.00 925.31 L941.25 925.14 L951.50 924.94 L961.75 924.75 L972.00 924.60 L982.25 924.51 L992.50 924.51 L996.50 925.30 L1003.00 929.00 L1008.00 931.20 L1013.50 928.30 L1019.00 925.30 L1023.25 924.89 L1033.50 925.09 L1043.75 925.28 L1054.00 925.42 L1064.25 925.49 L1074.50 925.49 L1084.75 925.41 L1095.00 925.26 L1105.25 925.08" fill="none" stroke="#72b0de" stroke-width="1.5"/>
<path d="M274 709.50H1080" stroke="#202060" stroke-opacity="0.07" stroke-width="1"/>
<path d="M274 735.50H1080" stroke="#202060" stroke-opacity="0.07" stroke-width="1"/>
<path d="M274 762.50H1080" stroke="#202060" stroke-opacity="0.07" stroke-width="1"/>
<path d="M274 789.50H1080" stroke="#202060" stroke-opacity="0.07" stroke-width="1"/>
<path d="M274 815.50H1080" stroke="#202060" stroke-opacity="0.07" stroke-width="1"/>
<path d="M274 842.50H1080" stroke="#202060" stroke-opacity="0.07" stroke-width="1"/>
<path d="M274 869.50H1080" stroke="#202060" stroke-opacity="0.07" stroke-width="1"/>
<path d="M274 896.50H1080" stroke="#202060" stroke-opacity="0.07" stroke-width="1"/>
<path d="M274 922.50H1080" stroke="#202060" stroke-opacity="0.07" stroke-width="1"/>
<path d="M274 949.50H1080" stroke="#202060" stroke-opacity="0.07" stroke-width="1"/>
</g>
<path d="M269 976.2H1080" stroke="#d0d3d8" stroke-width="1"/>
</svg>
<div class="yl" style="left:212.5px;top:702.70px;font-size:8.5px;line-height:12px">$20,000</div>
<div class="yl" style="left:212.5px;top:728.70px;font-size:8.5px;line-height:12px">$18,000</div>
<div class="yl" style="left:212.5px;top:755.70px;font-size:8.5px;line-height:12px">$16,000</div>
<div class="yl" style="left:212.5px;top:782.70px;font-size:8.5px;line-height:12px">$14,000</div>
<div class="yl" style="left:212.5px;top:808.70px;font-size:8.5px;line-height:12px">$12,000</div>
<div class="yl" style="left:212.5px;top:835.70px;font-size:8.5px;line-height:12px">$10,000</div>
<div class="yl" style="left:212.5px;top:862.70px;font-size:8.5px;line-height:12px">$8,000</div>
<div class="yl" style="left:212.5px;top:889.70px;font-size:8.5px;line-height:12px">$6,000</div>
<div class="yl" style="left:212.5px;top:915.70px;font-size:8.5px;line-height:12px">$4,000</div>
<div class="yl" style="left:212.5px;top:942.70px;font-size:8.5px;line-height:12px">$2,000</div>
<div class="yl" style="left:212.5px;top:969.70px;font-size:8.5px;line-height:12px">$0.00</div>
<div class="abs" style="left:553px;top:984px;font-size:8.5px;color:#2b2f36">Jul</div>
<div class="abs" style="left:867px;top:984px;font-size:8.5px;color:#2b2f36">Aug</div>
<div class="abs" style="left:334.5px;top:1007.5px;width:15.5px;height:16px;background:#a7d5e8;border-top:1px solid #7cc0e0"></div>
<div class="abs" style="left:354.0px;top:1010.5px;font-size:8.6px;color:#2b2f36">Effective Cost of Savings Plan</div>
<div class="abs" style="left:487px;top:1007.5px;width:15.5px;height:16px;background:#a7bdec;border-top:1px solid #7f9fe6"></div>
<div class="abs" style="left:506.5px;top:1010.5px;font-size:8.6px;color:#2b2f36">Saving Plan Hourly Waste</div>
<div class="abs" style="left:624px;top:1007.5px;width:15.5px;height:16px;background:#a5a5eb;border-top:1px solid #7f7fe4"></div>
<div class="abs" style="left:643.5px;top:1010.5px;font-size:8.6px;color:#2b2f36">Effective Cost of Reserved Instance</div>
<div class="abs" style="left:798px;top:1007.5px;width:15.5px;height:16px;background:#b2a3ea;border-top:1px solid #8f7ae2"></div>
<div class="abs" style="left:817.5px;top:1010.5px;font-size:8.6px;color:#2b2f36">Reserved Instance Hourly Waste</div>
<div class="abs" style="left:961px;top:1007.5px;width:15.5px;height:16px;background:#c9a4e8;border-top:1px solid #a77be0"></div>
<div class="abs" style="left:980.5px;top:1010.5px;font-size:8.6px;color:#2b2f36">Effective Cost of On-Demand</div>
<div class="abs" style="left:196px;top:1055.5px;width:884px;height:1px;background:#ebedf0"></div>
<div class="abs" style="left:196px;top:1056.5px;width:884px;height:12px;background:#fafafb"></div>
<svg class="abs" style="left:199px;top:1058px" width="8" height="9"><path d="M7 1V8L1.5 4.5Z" fill="#8a8a8a"/></svg>
</div></body></html>
